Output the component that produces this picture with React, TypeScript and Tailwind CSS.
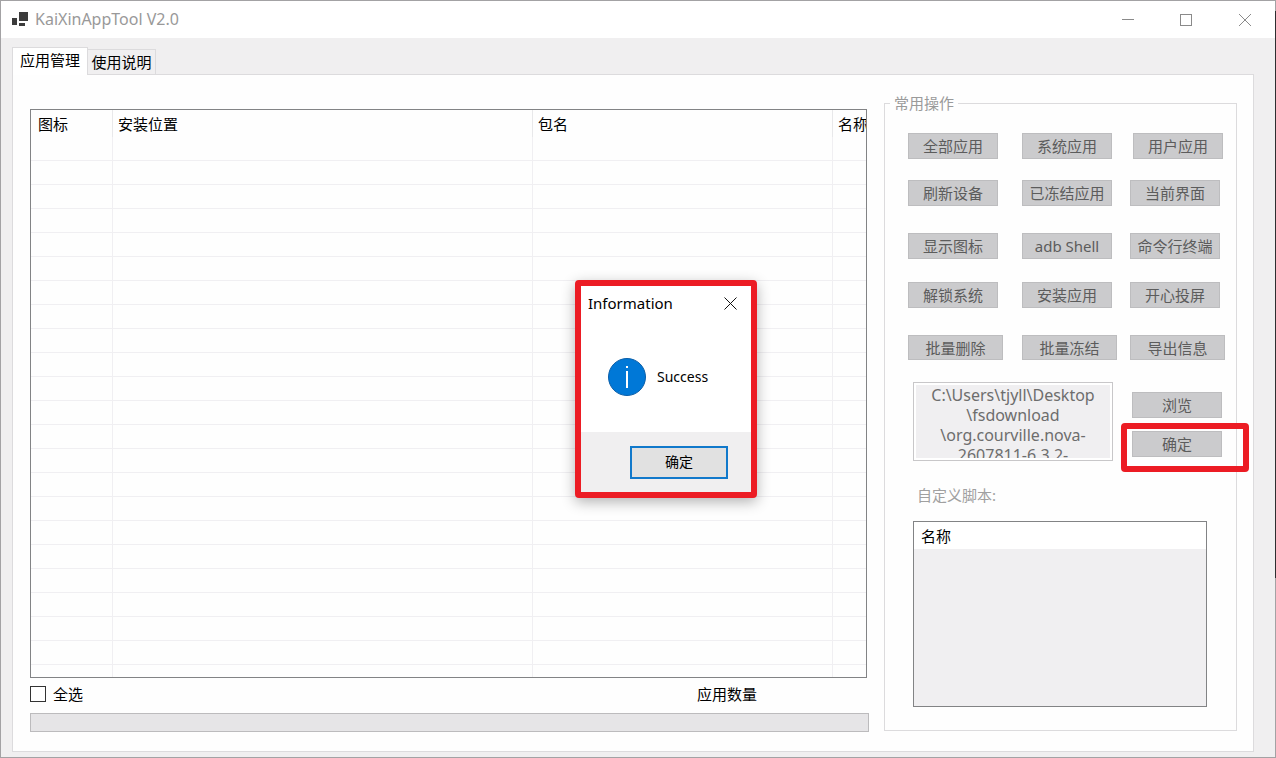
import { clsx } from "clsx";

interface ActionRow {
  labels: string[];
  className: string;
  wide?: boolean;
}

const COLUMNS = ["图标", "安装位置", "包名", "名称"];
const ROW_COUNT = 23;

const ACTION_ROWS: ActionRow[] = [
  { labels: ["全部应用", "系统应用", "用户应用"], className: "grid-cols-[114px_111px_auto] mt-5" },
  { labels: ["刷新设备", "已冻结应用", "当前界面"], className: "grid-cols-[114px_108px_auto] mt-[21px]" },
  { labels: ["显示图标", "adb Shell", "命令行终端"], className: "grid-cols-[114px_108px_auto] mt-[27px]" },
  { labels: ["解锁系统", "安装应用", "开心投屏"], className: "grid-cols-[114px_108px_auto] mt-[23px]" },
  { labels: ["批量删除", "批量冻结", "导出信息"], className: "grid-cols-[114px_108px_auto] mt-[27px]", wide: true },
];

const APK_PATH = "C:\\Users\\tjyll\\Desktop\n\\fsdownload\n\\org.courville.nova-\n2607811-6.3.2-";

function AppLogo() {
  return (
    <svg width="16" height="14" viewBox="0 0 16 14" aria-hidden="true">
      <rect x="0" y="6" width="5" height="7" fill="#3c3c3c" />
      <rect x="7" y="0" width="9" height="9" fill="#3c3c3c" />
      <rect x="7" y="11" width="6" height="3" fill="#3c3c3c" />
    </svg>
  );
}

function TitleBar() {
  return (
    <header className="flex h-[37px] shrink-0 items-center justify-between bg-white pl-[11px]">
      <div className="flex items-center gap-[7px] pb-[2px] text-[#999999]">
        <AppLogo />
        <h1 className="text-base leading-5">KaiXinAppTool V2.0</h1>
      </div>
      <div className="flex h-full text-[#8a8a8a]">
        <button type="button" aria-label="Minimize" className="flex w-[58px] items-center justify-center">
          <svg width="12" height="12" viewBox="0 0 12 12" stroke="currentColor">
            <path d="M0 5.5h12" />
          </svg>
        </button>
        <button type="button" aria-label="Maximize" className="flex w-[58px] items-center justify-center">
          <svg width="12" height="12" viewBox="0 0 12 12" fill="none" stroke="currentColor">
            <rect x="0.5" y="0.5" width="11" height="11" />
          </svg>
        </button>
        <button type="button" aria-label="Close" className="flex w-[60px] items-center justify-center">
          <svg width="12" height="12" viewBox="0 0 12 12" stroke="currentColor">
            <path d="M0 0l12 12M12 0L0 12" />
          </svg>
        </button>
      </div>
    </header>
  );
}

// Gray push button used in the operations panel
function ActionButton({ label, wide }: { label: string; wide?: boolean }) {
  return (
    <button
      type="button"
      className={clsx(
        "flex shrink-0 items-center justify-center border border-[#bdbdbf] bg-[#cbcbcd] whitespace-nowrap text-[#5c5c5c]",
        wide ? "h-[25px] w-[95px]" : "h-[26px] w-[90px]"
      )}
    >
      {label}
    </button>
  );
}

function AppTable() {
  return (
    <div className="mr-[2px] min-h-0 flex-1 overflow-hidden border border-[#828385] bg-[#fefefe]">
      <table className="w-full table-fixed border-separate border-spacing-0">
        <colgroup>
          <col className="w-[82px]" />
          <col />
          <col className="w-[300px]" />
          <col className="w-[33px]" />
        </colgroup>
        <thead>
          <tr className="h-[27px]">
            {COLUMNS.map((name) => (
              <th
                key={name}
                scope="col"
                className="overflow-hidden border-r border-[#e8e8ea] p-0 pl-[5px] text-left font-normal whitespace-nowrap first:pl-[7px] last:border-r-0"
              >
                {name}
              </th>
            ))}
          </tr>
        </thead>
        <tbody>
          {Array.from({ length: ROW_COUNT }, (_, row) => (
            <tr key={row} className="h-6">
              {COLUMNS.map((name) => (
                <td key={name} className="border-r border-b border-[#f0eff2] p-0 last:border-r-0" />
              ))}
            </tr>
          ))}
        </tbody>
      </table>
    </div>
  );
}

function OperationsPanel() {
  return (
    <fieldset className="mb-px w-[353px] shrink-0 border border-[#dcdbdd]">
      <legend className="ml-[5px] px-1 leading-5 text-[#9a9a9a]">常用操作</legend>
      <div className="pl-[23px]">
        {ACTION_ROWS.map((row) => (
          <div key={row.labels[0]} className={clsx("grid", row.className)}>
            {row.labels.map((label) => (
              <ActionButton key={label} label={label} wide={row.wide} />
            ))}
          </div>
        ))}

        <div className="mt-[22px] ml-[5px] flex gap-[19px]">
          <div className="h-[79px] w-[200px] border border-[#c8c7c9] bg-white p-[2px]">
            <textarea
              aria-label="APK path"
              defaultValue={APK_PATH}
              readOnly
              className="block h-full w-full resize-none overflow-hidden bg-[#f0eff1] text-center text-base leading-5 text-[#6d6d6d] outline-none"
            />
          </div>
          <div className="mt-[10px] flex flex-col gap-[13px]">
            <ActionButton label="浏览" />
            <div className="relative">
              <ActionButton label="确定" />
              <div className="pointer-events-none absolute -top-2 -right-[27px] -bottom-[15px] -left-[11px] rounded-[4px] border-[6px] border-[#ec1c24]" />
            </div>
          </div>
        </div>

        <p className="mt-6 ml-[9px] leading-5 text-[#a0a0a0]">自定义脚本:</p>

        <div className="mt-4 ml-[5px] h-[186px] w-[294px] border border-[#828385] bg-[#f0eff1]">
          <table className="w-full border-separate border-spacing-0">
            <thead>
              <tr className="h-[27px] bg-white">
                <th scope="col" className="p-0 pl-[7px] text-left font-normal">
                  名称
                </th>
              </tr>
            </thead>
          </table>
        </div>
      </div>
    </fieldset>
  );
}

function InfoDialog() {
  return (
    <div
      role="dialog"
      aria-labelledby="dialog-title"
      className="absolute top-[279px] left-[574px] flex h-[218px] w-[182px] flex-col rounded-[4px] border-[6px] border-[#ec1c24] bg-white shadow-[0_4px_14px_rgba(0,0,0,0.3)]"
    >
      <div className="flex h-[34px] shrink-0 items-center justify-between pr-[14px] pl-[7px]">
        <h2 id="dialog-title">Information</h2>
        <button type="button" aria-label="Close">
          <svg width="13" height="13" viewBox="0 0 13 13" stroke="#111">
            <path d="M0.5 0.5l12 12M12.5 0.5l-12 12" />
          </svg>
        </button>
      </div>
      <div className="flex flex-1 items-center gap-[11px] pt-[2px] pl-[27px]">
        <svg width="38" height="38" viewBox="0 0 38 38" aria-hidden="true">
          <circle cx="19" cy="19" r="18.5" fill="#0078d7" stroke="#0a5ea8" />
          <rect x="18" y="8" width="2" height="2" fill="#fff" />
          <rect x="18" y="13" width="2" height="17" fill="#fff" />
        </svg>
        <p className="text-[14px]">Success</p>
      </div>
      <div className="flex h-[60px] shrink-0 items-center justify-end bg-[#f0eff0] pr-[23px]">
        <button
          type="button"
          className="h-[33px] w-[98px] border-2 border-[#1179cb] bg-[#e1e1e1] text-[14px]"
        >
          确定
        </button>
      </div>
    </div>
  );
}

export default function App() {
  return (
    <div className="relative flex h-screen min-h-[758px] flex-col border border-[#a3a2a4] bg-[#f0eff0] font-['Noto_Sans','Noto_Sans_CJK_SC',sans-serif] text-[15px] leading-5 text-black">
      <TitleBar />

      <div className="flex min-h-0 flex-1 flex-col pt-[9px] pr-[21px] pb-[5px] pl-[11px]">
        <div role="tablist" className="flex shrink-0 items-end">
          <button
            type="button"
            role="tab"
            aria-selected="true"
            className="relative z-10 -mb-px h-7 w-[76px] border border-b-0 border-[#dcdbdd] bg-white pb-1"
          >
            应用管理
          </button>
          <button
            type="button"
            role="tab"
            aria-selected="false"
            className="h-[25px] w-[68px] border border-b-0 border-l-0 border-[#dcdbdd] bg-[#f0eff0]"
          >
            使用说明
          </button>
        </div>

        <main className="flex min-h-0 flex-1 gap-[15px] border border-[#dcdbdd] bg-[#fefefe] pt-[18px] pr-4 pb-[19px] pl-[17px]">
          <section className="flex min-w-0 flex-1 flex-col pt-4">
            <AppTable />
            <div className="flex h-[35px] shrink-0 items-center justify-between pr-28 pb-[3px]">
              <label className="flex items-center gap-[7px]">
                <input
                  type="checkbox"
                  className="size-4 appearance-none border border-[#333333] bg-white checked:bg-[#333333]"
                />
                全选
              </label>
              <span>应用数量</span>
            </div>
            <div
              role="progressbar"
              aria-label="Progress"
              aria-valuenow={0}
              className="h-[19px] shrink-0 border border-[#bcbbbd] bg-[#e6e5e7]"
            />
          </section>
          <OperationsPanel />
        </main>
      </div>

      {/* Dark desktop edge behind the window */}
      <div className="absolute top-[10px] -right-px h-[567px] w-px bg-[#2e2e30]" />

      <InfoDialog />
    </div>
  );
}
